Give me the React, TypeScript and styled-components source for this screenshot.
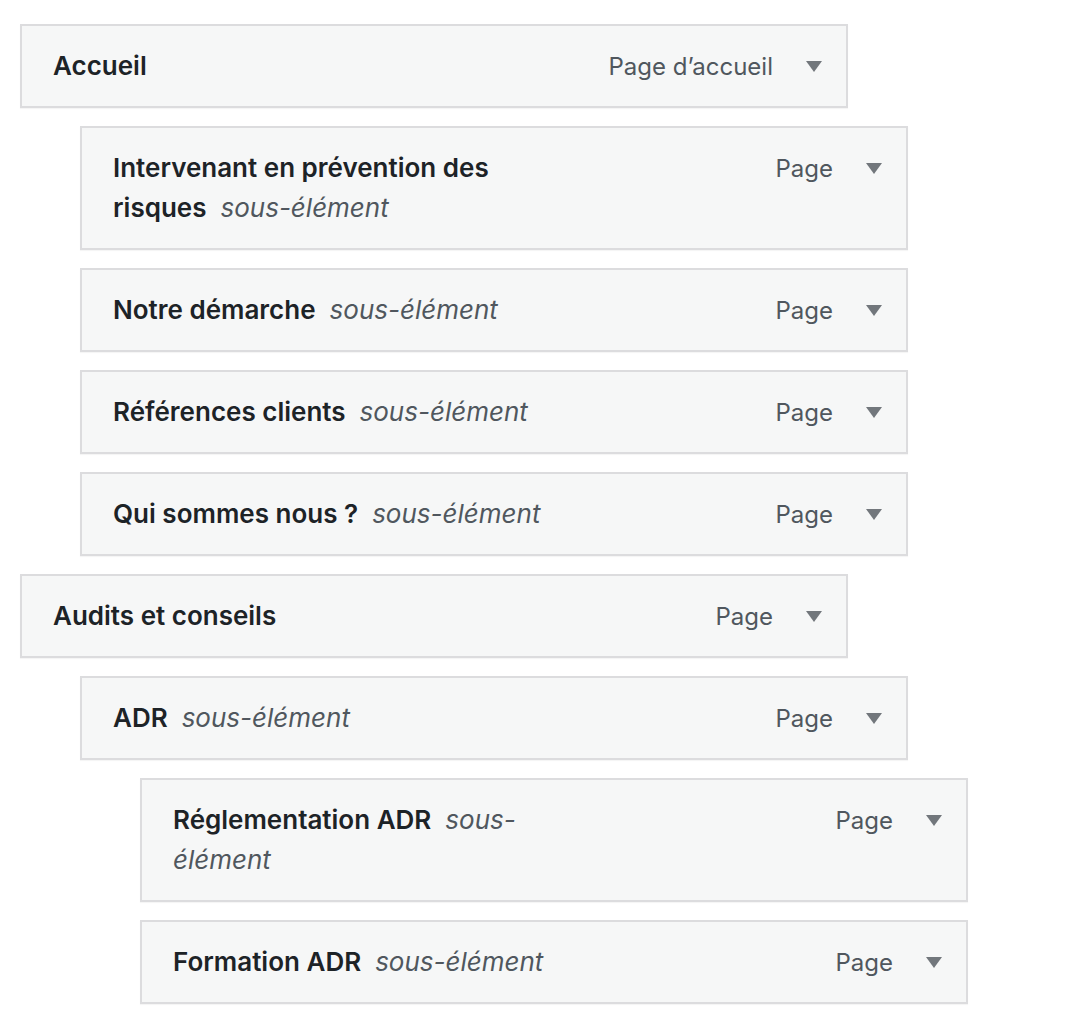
import React from "react";
import styled, { createGlobalStyle } from "styled-components";

type MenuEntry = {
  title: string;
  type: string;
  depth: number;
  sub?: boolean;
};

const entries: MenuEntry[] = [
  { title: "Accueil", type: "Page d’accueil", depth: 0 },
  { title: "Intervenant en prévention des risques", type: "Page", depth: 1, sub: true },
  { title: "Notre démarche", type: "Page", depth: 1, sub: true },
  { title: "Références clients", type: "Page", depth: 1, sub: true },
  { title: "Qui sommes nous ?", type: "Page", depth: 1, sub: true },
  { title: "Audits et conseils", type: "Page", depth: 0 },
  { title: "ADR", type: "Page", depth: 1, sub: true },
  { title: "Réglementation ADR", type: "Page", depth: 2, sub: true },
  { title: "Formation ADR", type: "Page", depth: 2, sub: true },
];

const GlobalStyle = createGlobalStyle`
  html, body {
    margin: 0;
    background: #ffffff;
  }
  body {
    font-family: Inter, "Noto Sans", "Liberation Sans", sans-serif;
    -webkit-font-smoothing: antialiased;
  }
`;

const App = () => (
  <>
    <GlobalStyle />
    <MenuList>
      {entries.map((item) => (
        <MenuItem key={item.title} $depth={item.depth}>
          <Title>
            {item.title}
            {item.sub && <SubLabel>sous-élément</SubLabel>}
          </Title>
          <Controls>
            <ItemType>{item.type}</ItemType>
            <Arrow viewBox="0 0 16 11" aria-hidden="true">
              <path d="M0 0h16L8 11z" />
            </Arrow>
          </Controls>
        </MenuItem>
      ))}
    </MenuList>
  </>
);

export default App;

const MenuList = styled.ul`
  list-style: none;
  margin: 0;
  padding: 24px 20px;
  display: flex;
  flex-direction: column;
  gap: 18px;
`;

const MenuItem = styled.li<{ $depth: number }>`
  box-sizing: border-box;
  width: 828px;
  margin-left: ${(p) => p.$depth * 60}px;
  display: flex;
  align-items: flex-start;
  justify-content: space-between;
  padding: 20px 24px 20px 31px;
  background: #f6f7f7;
  border: 2px solid #dcdcde;
  box-shadow: 0 1px 1px rgba(0, 0, 0, 0.04);
`;

const Title = styled.div`
  max-width: 440px;
  font-size: 26px;
  line-height: 40px;
  font-weight: 600;
  color: #1d2327;
`;

const SubLabel = styled.span`
  margin-left: 14px;
  font-style: italic;
  font-weight: 400;
  color: #50575e;
`;

const Controls = styled.div`
  display: flex;
  align-items: center;
  gap: 33px;
  height: 40px;
`;

const ItemType = styled.span`
  font-size: 24px;
  font-weight: 400;
  color: #50575e;
`;

const Arrow = styled.svg`
  width: 16px;
  height: 11px;
  fill: #72777c;
`;
